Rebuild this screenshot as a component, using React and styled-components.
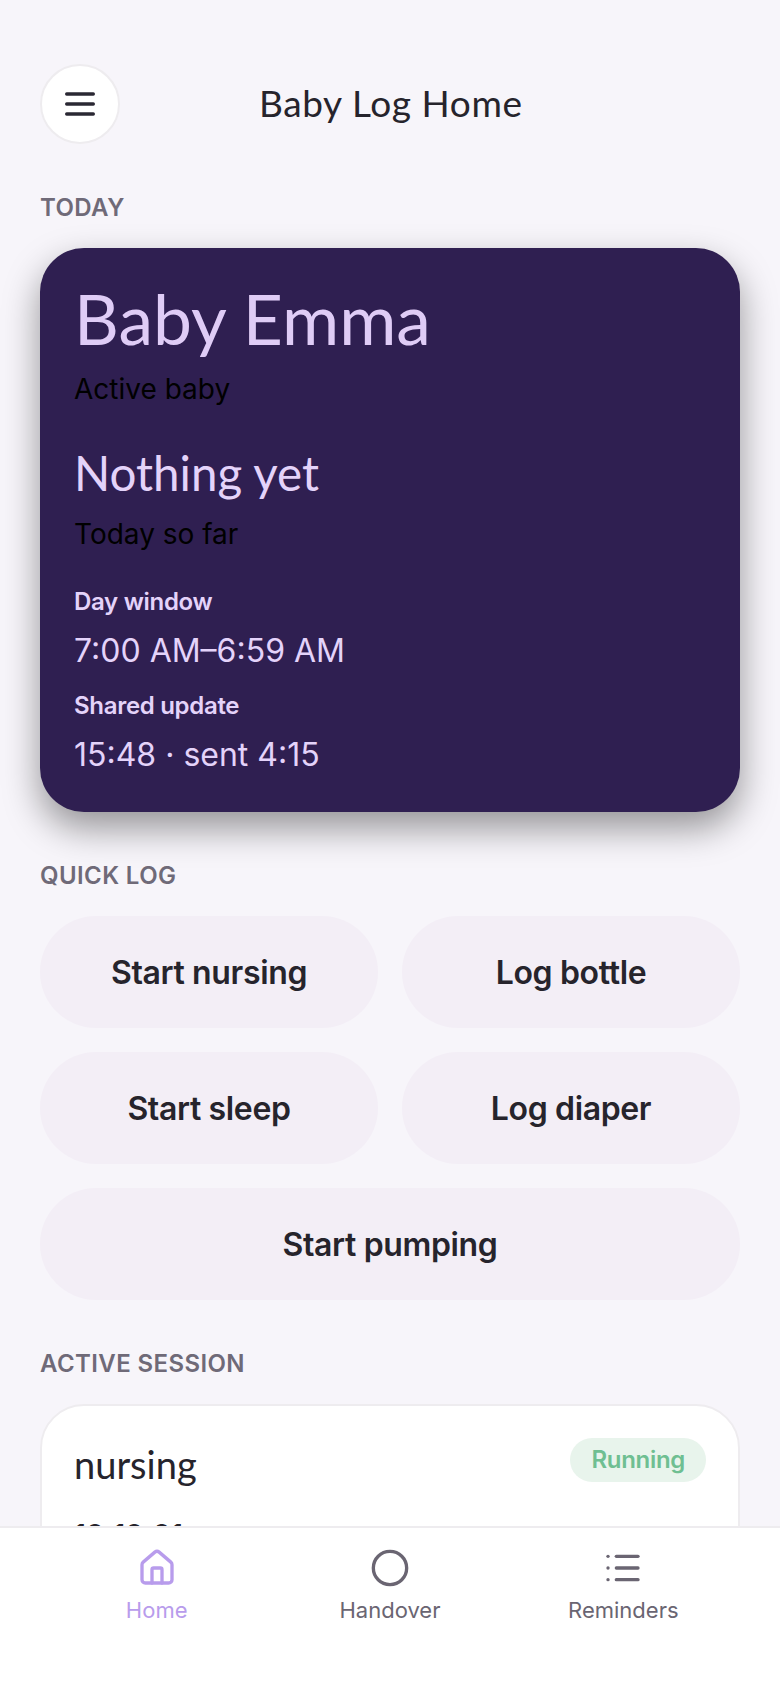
import React from "react";
import styled, { createGlobalStyle } from "styled-components";
import { House, Circle, List } from "lucide-react";

const Global = createGlobalStyle`
  html, body { margin: 0; padding: 0; height: 100%; overflow: hidden; background: #f7f5fa; }
  * { box-sizing: border-box; }
  body { font-family: Inter, "Liberation Sans", sans-serif; color: #26242c; }
`;
const display = `Lato, "Noto Sans", sans-serif`;

const Page = styled.div`
  height: 1688px;
  overflow: hidden;
  padding: 64px 40px 0;
  display: flex;
  flex-direction: column;
`;
const Header = styled.header`
  display: flex;
  align-items: center;
  flex: none;
  height: 80px;
  gap: 139px;
`;
const MenuButton = styled.button`
  width: 80px;
  height: 80px;
  border-radius: 50%;
  background: #fff;
  border: 2px solid #eeecef;
  display: flex;
  align-items: center;
  justify-content: center;
  padding: 0;
  color: #2a2833;
`;
const Title = styled.h1`
  margin: 0 0 3px;
  font: 400 37px ${display};
  letter-spacing: 0.6px;
`;
const SectionLabel = styled.h2`
  flex: none;
  margin: ${(p) => p.$top}px 0 ${(p) => p.$bottom}px;
  font: 600 24px/30px Inter, sans-serif;
  letter-spacing: 0.4px;
  color: #6f6a78;
  text-transform: uppercase;
`;
const HeroCard = styled.section`
  flex: none;
  background: #2f1f51;
  border-radius: 44px;
  padding: 30px 34px 34px;
  height: 564px;
  box-shadow: 0 16px 36px rgba(0, 0, 0, 0.4);
  display: flex;
  flex-direction: column;
`;
const HeroName = styled.div`
  font: 400 69.5px/80px ${display};
  color: #dfccf6;
`;
const HeroSub = styled.div`
  font: 400 28px/40px Inter, sans-serif;
  color: #000;
  margin-top: ${(p) => p.$top || 0}px;
`;
const HeroValue = styled.div`
  font: 400 47.5px/60px ${display};
  color: #e4d3fa;
  margin-top: 34px;
`;
const MetaLabel = styled.div`
  font: 600 24px/32px Inter, sans-serif;
  letter-spacing: -0.3px;
  color: #e4d3fa;
  margin-top: ${(p) => p.$top}px;
`;
const MetaValue = styled.div`
  font: 400 32px/40px Inter, sans-serif;
  color: #e4d3fa;
  margin-top: 13px;
`;
const ActionGrid = styled.div`
  flex: none;
  display: grid;
  grid-template-columns: 1fr 1fr;
  gap: 24px;
`;
const ActionButton = styled.button`
  height: 112px;
  border: 0;
  border-radius: 56px;
  background: #f3eef6;
  font: 560 32px Inter, sans-serif;
  letter-spacing: -0.35px;
  color: #26242c;
  grid-column: ${(p) => (p.$wide ? "1 / -1" : "auto")};
`;
const SessionCard = styled.section`
  background: #fff;
  border: 2px solid #eeecef;
  border-radius: 44px;
  padding: 32px;
  height: 400px;
  flex: none;
`;
const SessionHead = styled.div`
  display: flex;
  justify-content: space-between;
  align-items: flex-start;
`;
const SessionName = styled.div`
  font: 400 38px/52px ${display};
`;
const Badge = styled.span`
  background: #e8f4ec;
  color: #6fbf92;
  border-radius: 22px;
  height: 44px;
  padding: 0 21px;
  font: 600 24px/44px Inter, sans-serif;
  letter-spacing: -0.3px;
`;
const Timer = styled.div`
  font: 600 28px/40px Inter, sans-serif;
  color: #26242c;
  margin-top: 25px;
`;
const BottomNav = styled.nav`
  position: fixed;
  left: 0;
  right: 0;
  bottom: 0;
  height: 162px;
  background: #fff;
  border-top: 2px solid #eeecef;
  display: grid;
  grid-template-columns: repeat(3, 1fr);
  padding: 0 ${(p) => p.$pad}px;
`;
const NavItem = styled.div`
  display: flex;
  flex-direction: column;
  align-items: center;
  padding-top: 20px;
  gap: 7px;
  font: 400 22px/30px Inter, sans-serif;
  color: ${(p) => (p.$active ? "#b89cec" : "#6a6572")};
`;

const actions = [
  ["Start nursing"],
  ["Log bottle"],
  ["Start sleep"],
  ["Log diaper"],
  ["Start pumping", true],
];

export default function App() {
  return (
    <>
      <Global />
      <Page>
        <Header>
          <MenuButton aria-label="Menu">
            <svg width="40" height="40" viewBox="0 0 24 24" fill="none" stroke="currentColor" strokeWidth="2" strokeLinecap="round">
              <path d="M4 6h16M4 12h16M4 18h16" />
            </svg>
          </MenuButton>
          <Title>Baby Log Home</Title>
        </Header>
        <SectionLabel $top={49} $bottom={25}>Today</SectionLabel>
        <HeroCard>
          <HeroName>Baby Emma</HeroName>
          <HeroSub $top={11}>Active baby</HeroSub>
          <HeroValue>Nothing yet</HeroValue>
          <HeroSub $top={11}>Today so far</HeroSub>
          <MetaLabel $top={32}>Day window</MetaLabel>
          <MetaValue>7:00 AM–6:59 AM</MetaValue>
          <MetaLabel $top={19}>Shared update</MetaLabel>
          <MetaValue>15:48 · sent 4:15</MetaValue>
        </HeroCard>
        <SectionLabel $top={49} $bottom={25}>Quick log</SectionLabel>
        <ActionGrid>
          {actions.map(([label, wide]) => (
            <ActionButton key={label} $wide={wide}>{label}</ActionButton>
          ))}
        </ActionGrid>
        <SectionLabel $top={49} $bottom={25}>Active session</SectionLabel>
        <SessionCard>
          <SessionHead>
            <SessionName>nursing</SessionName>
            <Badge>Running</Badge>
          </SessionHead>
          <Timer>10:10:01</Timer>
        </SessionCard>
      </Page>
      <BottomNav $pad={40}>
        <NavItem $active>
          <House size={40} />
          Home
        </NavItem>
        <NavItem>
          <Circle size={40} />
          Handover
        </NavItem>
        <NavItem>
          <List size={40} />
          Reminders
        </NavItem>
      </BottomNav>
    </>
  );
}
